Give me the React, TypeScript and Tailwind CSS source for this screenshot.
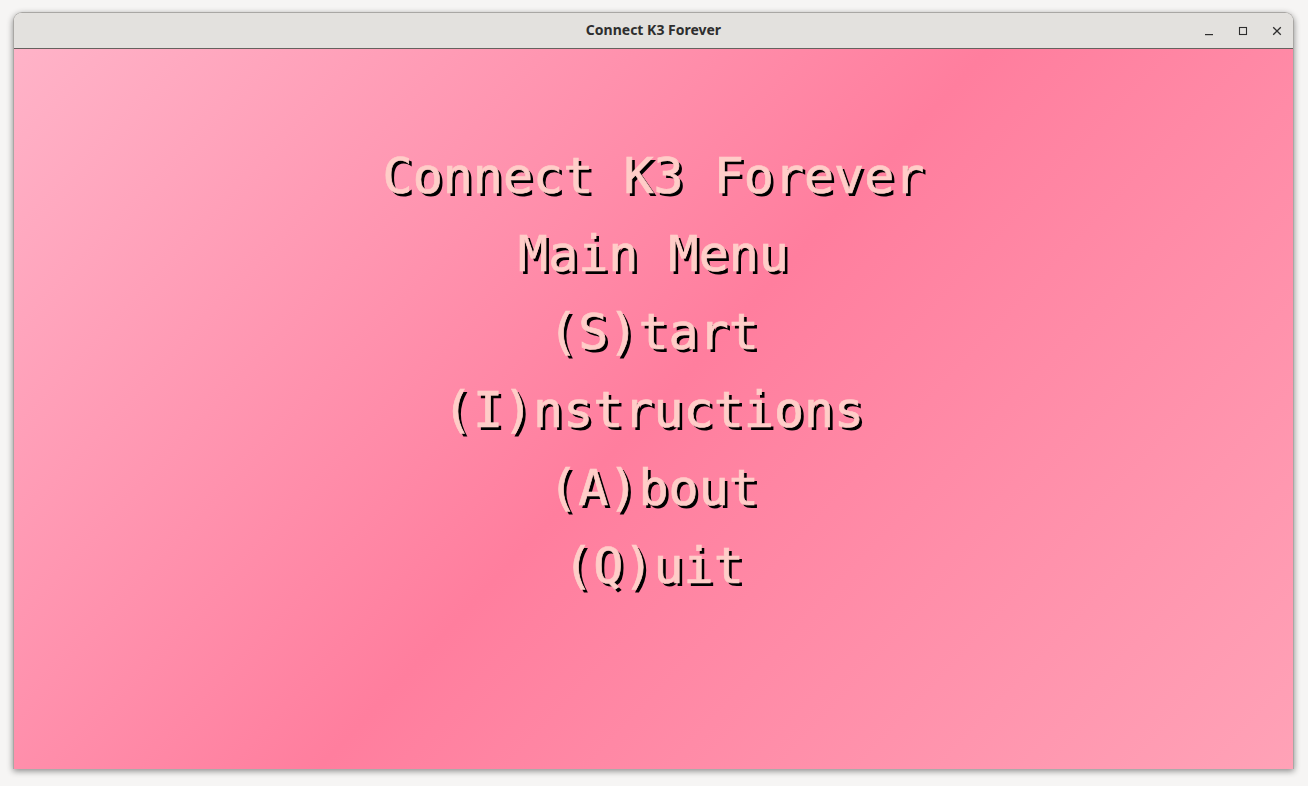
import React from "react";

const lines = [
  "Connect K3 Forever",
  "Main Menu",
  "(S)tart",
  "(I)nstructions",
  "(A)bout",
  "(Q)uit",
];

export default function App() {
  return (
    <div className="w-[1308px] h-[786px] bg-[#f6f5f4] pt-[12px] pl-[13px] overflow-hidden">
      <div className="w-[1281px] h-[757px] flex flex-col rounded-t-[9px] overflow-hidden shadow-[0_2px_6px_rgba(0,0,0,0.45)] border border-[#a9a7a4] border-b-0">
        <div className="h-[36px] shrink-0 bg-[#e3e1de] border-b border-[#65625e] flex items-center relative">
          <div className="flex-1 text-center text-[14px] leading-[20px] pb-[2px] font-bold text-[#2e2e2e] [font-family:'Noto_Sans','Open_Sans',sans-serif]">
            Connect K3 Forever
          </div>
          <div className="absolute right-[4px] top-0 h-full flex items-center gap-[14px] pr-[2px]">
            <div className="w-[20px] h-[20px] flex items-center justify-center">
              <svg width="10" height="10" viewBox="0 0 10 10">
                <rect x="1" y="8" width="8" height="1.2" fill="#2e2e2e" />
              </svg>
            </div>
            <div className="w-[20px] h-[20px] flex items-center justify-center">
              <svg width="10" height="10" viewBox="0 0 10 10">
                <rect x="1.5" y="1.5" width="7" height="7" fill="none" stroke="#2e2e2e" strokeWidth="1.1" />
              </svg>
            </div>
            <div className="w-[20px] h-[20px] flex items-center justify-center">
              <svg width="10" height="10" viewBox="0 0 10 10">
                <path d="M1.2 1.2 L8.8 8.8 M8.8 1.2 L1.2 8.8" stroke="#2e2e2e" strokeWidth="1.3" />
              </svg>
            </div>
          </div>
        </div>
        <div className="flex-1 bg-[linear-gradient(133deg,#ffb3c8_0%,#ff7e9e_50%,#ffa2b7_100%)] flex flex-col items-center pt-[88px]">
          {lines.map((t) => (
            <div
              key={t}
              className="text-[50px] leading-[78px] text-[#ffcdc8] whitespace-pre [font-family:'DejaVu_Sans_Mono',monospace] [text-shadow:3px_3px_0_#000] [-webkit-text-stroke:0.7px_#ffcdc8]"
            >
              {t}
            </div>
          ))}
        </div>
      </div>
    </div>
  );
}
